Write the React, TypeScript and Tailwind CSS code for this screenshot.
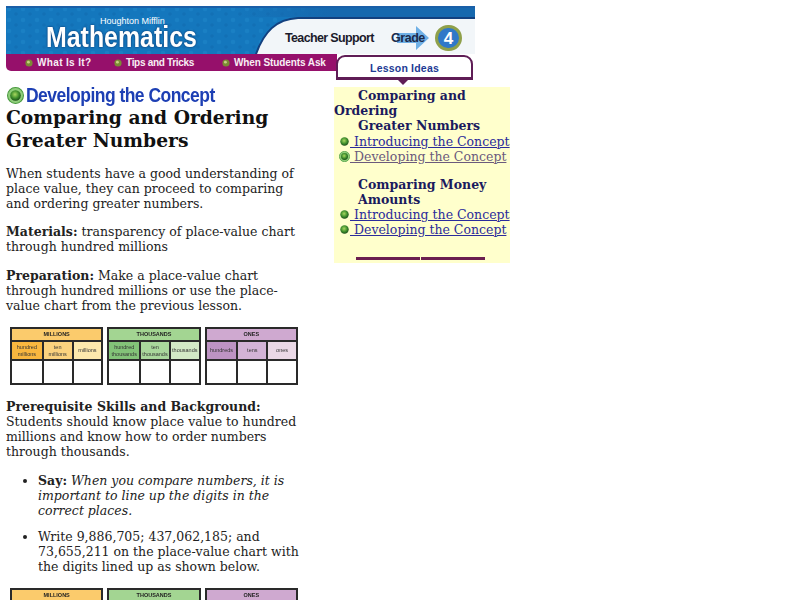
const serif = "font-['DejaVu_Serif',serif]"
const sans = "font-['Liberation_Sans',sans-serif]"

const groups = [
  {
    title: "MILLIONS", head: "bg-[#fbcb6c]",
    cols: [
      { label: "hundred millions", bg: "bg-[#f9b73f]" },
      { label: "ten millions", bg: "bg-[#fbd27e]" },
      { label: "millions", bg: "bg-[#fde9ad]" },
    ],
  },
  {
    title: "THOUSANDS", head: "bg-[#a3d592]",
    cols: [
      { label: "hundred thousands", bg: "bg-[#83c378]" },
      { label: "ten thousands", bg: "bg-[#a9d79c]" },
      { label: "thousands", bg: "bg-[#d3e9c6]" },
    ],
  },
  {
    title: "ONES", head: "bg-[#cfa9d0]",
    cols: [
      { label: "hundreds", bg: "bg-[#bd93c3]" },
      { label: "tens", bg: "bg-[#d3b3d6]" },
      { label: "ones", bg: "bg-[#ead8e6]" },
    ],
  },
]

function PlaceChart() {
  return (
    <div className="flex gap-[4px] w-[288px] blur-[0.4px]">
      {groups.map(g => (
        <div key={g.title} className="flex-1 border-2 border-[#2a2a2a] bg-white">
          <div className={`h-[13px] flex items-center justify-center text-[5.5px] font-bold text-[#222] border-b-2 border-[#2a2a2a] ${sans} ${g.head}`}>
            {g.title}
          </div>
          <div className="grid grid-cols-3 h-[19px] border-b-2 border-[#2a2a2a]">
            {g.cols.map((c, i) => (
              <div key={c.label} className={`flex items-center justify-center text-center px-[3px] leading-[7px] text-[5.5px] text-[#333] ${sans} ${c.bg} ${i > 0 ? "border-l-2 border-[#2a2a2a]" : ""}`}>
                {c.label}
              </div>
            ))}
          </div>
          <div className="grid grid-cols-3 h-[22px]">
            {g.cols.map((c, i) => (
              <div key={c.label} className={i > 0 ? "border-l-2 border-[#2a2a2a]" : ""} />
            ))}
          </div>
        </div>
      ))}
    </div>
  )
}

function Ball({ size = 8, ring }: { size?: number; ring?: boolean }) {
  return (
    <svg width={size} height={size} viewBox="0 0 16 16" className="shrink-0">
      <defs>
        <radialGradient id="ballG" cx="45%" cy="40%" r="60%">
          <stop offset="0%" stopColor="#a8d860" />
          <stop offset="60%" stopColor="#3f8f2c" />
          <stop offset="100%" stopColor="#1d4f1a" />
        </radialGradient>
      </defs>
      {ring && <circle cx="8" cy="8" r="7.5" fill="#8fce7a" stroke="#4a9a40" strokeWidth="1" />}
      <circle cx="8" cy="8" r={ring ? 5 : 7.5} fill="url(#ballG)" />
    </svg>
  )
}

function NavItem({ label, className }: { label: string; className: string }) {
  return (
    <span className={`flex items-center gap-[4px] ${className}`}>
      <svg width="8" height="8" viewBox="0 0 8 8" className="shrink-0">
        <circle cx="4" cy="4" r="3.6" fill="#7c8a34" />
        <circle cx="3.4" cy="3.2" r="1.4" fill="#c8d080" />
      </svg>
      {label}
    </span>
  )
}

function Banner() {
  return (
    <div className="relative w-[469px] h-[72px] mt-[6px] ml-[6px]">
      <div className="relative h-[48px] bg-[#1477bd] overflow-hidden">
        <svg viewBox="0 0 469 48" className="absolute inset-0 w-full h-full">
          <defs>
            <pattern id="speck" width="14" height="11" patternUnits="userSpaceOnUse">
              <circle cx="3" cy="3" r="2.2" fill="#1a80c4" />
              <circle cx="10" cy="8" r="1.8" fill="#1270b5" />
            </pattern>
            <linearGradient id="band" x1="0" x2="1" y1="0" y2="0">
              <stop offset="0%" stopColor="#1668ae" stopOpacity="0" />
              <stop offset="40%" stopColor="#1668ae" />
            </linearGradient>
          </defs>
          <rect x="0" y="0" width="469" height="48" fill="url(#speck)" />
          <rect x="0" y="0" width="469" height="2" fill="#1a5fa8" />
          <rect x="230" y="2" width="239" height="9" fill="url(#band)" />
          <path d="M250 48 C258 26 270 13 292 12 L469 12 L469 48 Z" fill="#f2f6f9" />
          <path d="M250 48 C258 26 270 13 292 12 L469 12" fill="none" stroke="#12407f" strokeWidth="2" />
        </svg>
        <div className={`absolute left-[94px] top-[10px] text-[9px] leading-[10px] text-white ${sans}`}>Houghton Mifflin</div>
        <div className={`absolute left-[40px] top-[14px] w-[182px] scale-x-[0.83] origin-left text-[30px] leading-[33px] font-bold text-white drop-shadow-[0_0_1px_#0b2f66] ${sans}`}>Mathematics</div>
        <div className="absolute left-[279px] top-[19px] flex items-center">
          <span className={`w-[106px] text-[12.5px] leading-[18px] font-bold tracking-[-0.65px] whitespace-nowrap text-[#1b1b2b] ${sans}`}>Teacher Support</span>
          <span className={`relative w-[37px] text-[12.5px] leading-[18px] font-bold tracking-[-0.45px] whitespace-nowrap text-[#1b2b4b] ${sans}`}>
            <svg width="32" height="24" viewBox="0 0 32 24" className="absolute left-[6px] top-[-3px]">
              <path d="M0 7 H19 V0 L32 12 L19 24 V17 H0 Z" fill="#6fb0e6" />
            </svg>
            <span className="relative">Grade</span>
          </span>
          <span className={`ml-[7px] w-[27px] h-[26px] shrink-0 rounded-full bg-[#2f78c8] border-[3px] border-[#8fa04a] flex items-center justify-center text-[17px] font-bold text-white ${sans}`}>4</span>
        </div>
      </div>
      <div className={`h-[17px] w-[331px] bg-[#96106b] rounded-bl-[5px] flex items-center pl-[19px] text-[10px] font-bold text-[#f8eef4] whitespace-nowrap ${sans}`}>
        <NavItem label="What Is It?" className="w-[66px] tracking-[0.35px]" />
        <NavItem label="Tips and Tricks" className="w-[81px] ml-[23px] tracking-[-0.3px]" />
        <NavItem label="When Students Ask" className="ml-[27px] tracking-[-0.1px]" />
      </div>
      <div className={`absolute left-[330px] top-[49px] w-[137px] h-[25px] pt-[2px] bg-white rounded-t-[9px] border-2 border-[#5f1d56] border-b-[3px] flex items-center justify-center text-[10.5px] font-bold tracking-[0.2px] text-[#1d3a94] ${sans}`}>
        Lesson Ideas
      </div>
      <svg width="10" height="5" viewBox="0 0 10 5" className="absolute left-[392px] top-[74px]">
        <path d="M0 0 H10 L5 5 Z" fill="#5f1d56" />
      </svg>
    </div>
  )
}

function SideLink({ label, ring, visited }: { label: string; ring?: boolean; visited?: boolean }) {
  return (
    <div className={`flex items-center h-[15px] ${ring ? "pl-[5px]" : "pl-[6px]"}`}>
      <Ball size={ring ? 11 : 9} ring={ring} />
      <a href="#" onClick={e => e.preventDefault()} className={`underline whitespace-pre ${ring ? "" : "ml-[1px]"} ${visited ? "text-[#6b5a7c]" : "text-[#2b2b9b]"}`}>
        {" "}{label}
      </a>
    </div>
  )
}

export default function App() {
  return (
    <div className={`w-[800px] h-[600px] overflow-hidden bg-white text-[12.5px] leading-[15px] text-[#222] ${serif}`}>
      <Banner />
      <div className="flex mt-[9px] items-start">
        <main className="w-[334px] shrink-0 pl-[6px] pr-[34px]">
          <div className={`flex items-center gap-[2px] h-[16px] ml-[1px] ${sans}`}>
            <Ball size={17} ring />
            <span className="w-[206px] scale-x-[0.875] origin-left text-[20px] font-bold tracking-[-0.6px] text-[#1d3fb4] whitespace-nowrap">Developing the Concept</span>
          </div>
          <h1 className="mt-[3px] text-[18.7px] leading-[23px] font-bold text-[#111]">Comparing and Ordering<br />Greater Numbers</h1>
          <p className="mt-[14px]">When students have a good understanding of place value, they can proceed to comparing and ordering greater numbers.</p>
          <p className="mt-[13px]"><b>Materials:</b> transparency of place-value chart through hundred millions</p>
          <p className="mt-[14px]"><b>Preparation:</b> Make a place-value chart through hundred millions or use the place-value chart from the previous lesson.</p>
          <div className="mt-[14px] ml-[4px]"><PlaceChart /></div>
          <p className="mt-[14px]"><b>Prerequisite Skills and Background:</b><br />Students should know place value to hundred millions and know how to order numbers through thousands.</p>
          <ul className="mt-[14px] pl-[32px] list-disc">
            <li><b>Say:</b> <i>When you compare numbers, it is important to line up the digits in the correct places.</i></li>
            <li className="mt-[11px]">Write 9,886,705; 437,062,185; and 73,655,211 on the place-value chart with the digits lined up as shown below.</li>
          </ul>
          <div className="mt-[14px] ml-[4px]"><PlaceChart /></div>
        </main>
        <aside className="w-[176px] h-[176px] pt-[1px] bg-[#ffffcc] text-[#14145a]">
          <div className="font-bold text-[#1a1a5e]">
            <div className="indent-[24px]">Comparing and Ordering</div>
            <div className="pl-[24px] mb-[1px]">Greater Numbers</div>
          </div>
          <SideLink label="Introducing the Concept" />
          <SideLink label="Developing the Concept" ring visited />
          <div className="mt-[13px] pl-[24px] pr-[20px] font-bold text-[#1a1a5e]">Comparing Money Amounts</div>
          <SideLink label="Introducing the Concept" />
          <SideLink label="Developing the Concept" />
          <div className="mt-[20px] ml-[22px] mr-[25px] flex gap-[1px]">
            <div className="flex-1 h-[3px] bg-[#6b1f4f]" />
            <div className="flex-1 h-[3px] bg-[#6b1f4f]" />
          </div>
        </aside>
      </div>
    </div>
  )
}
